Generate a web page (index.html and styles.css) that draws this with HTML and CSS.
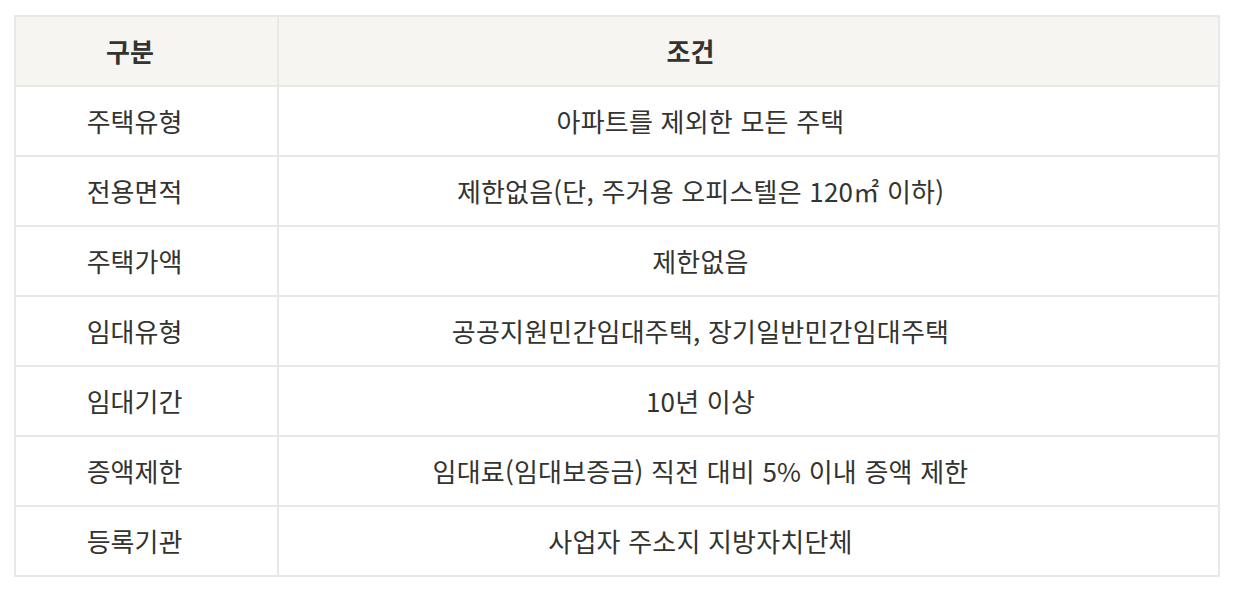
FILE: index.html
```html
<!DOCTYPE html>
<html lang="ko">
<head>
<meta charset="utf-8">
<link rel="stylesheet" href="styles.css">
</head>
<body>
<table class="cond-table">
  <colgroup><col class="col-key"><col class="col-val"></colgroup>
  <thead>
    <tr><th class="key">구분</th><th class="val">조건</th></tr>
  </thead>
  <tbody>
    <tr><td class="key">주택유형</td><td class="val">아파트를 제외한 모든 주택</td></tr>
    <tr><td class="key">전용면적</td><td class="val">제한없음(단, 주거용 오피스텔은 120㎡ 이하)</td></tr>
    <tr><td class="key">주택가액</td><td class="val">제한없음</td></tr>
    <tr><td class="key">임대유형</td><td class="val">공공지원민간임대주택, 장기일반민간임대주택</td></tr>
    <tr><td class="key">임대기간</td><td class="val">10년 이상</td></tr>
    <tr><td class="key">증액제한</td><td class="val">임대료(임대보증금) 직전 대비 5% 이내 증액 제한</td></tr>
    <tr><td class="key">등록기관</td><td class="val">사업자 주소지 지방자치단체</td></tr>
  </tbody>
</table>
</body>
</html>
```
FILE: styles.css
```css
html, body {
  margin: 0;
  background: #ffffff;
}
body {
  padding: 15px 0 0 14px;
  font-family: "Noto Sans CJK KR", "Noto Sans", sans-serif;
  color: #333330;
}
.cond-table {
  width: 1206px;
  border-collapse: collapse;
  table-layout: fixed;
}
.col-key { width: 263px; }
.cond-table th,
.cond-table td {
  border: 2px solid #e8e8e6;
  height: 68px;
  padding: 0;
  text-align: center;
  vertical-align: middle;
  font-size: 26px;
  line-height: 1.3;
}
.cond-table th {
  background: #f6f5f1;
  font-weight: 700;
}
.cond-table td {
  font-weight: 400;
}
.cond-table td.val { letter-spacing: 0.2px; }
.cond-table td.key { padding-right: 24px; }
.cond-table td.val { padding-right: 96px; }
.cond-table th.key { padding-right: 33px; }
.cond-table th.val { padding-right: 116px; }
```
